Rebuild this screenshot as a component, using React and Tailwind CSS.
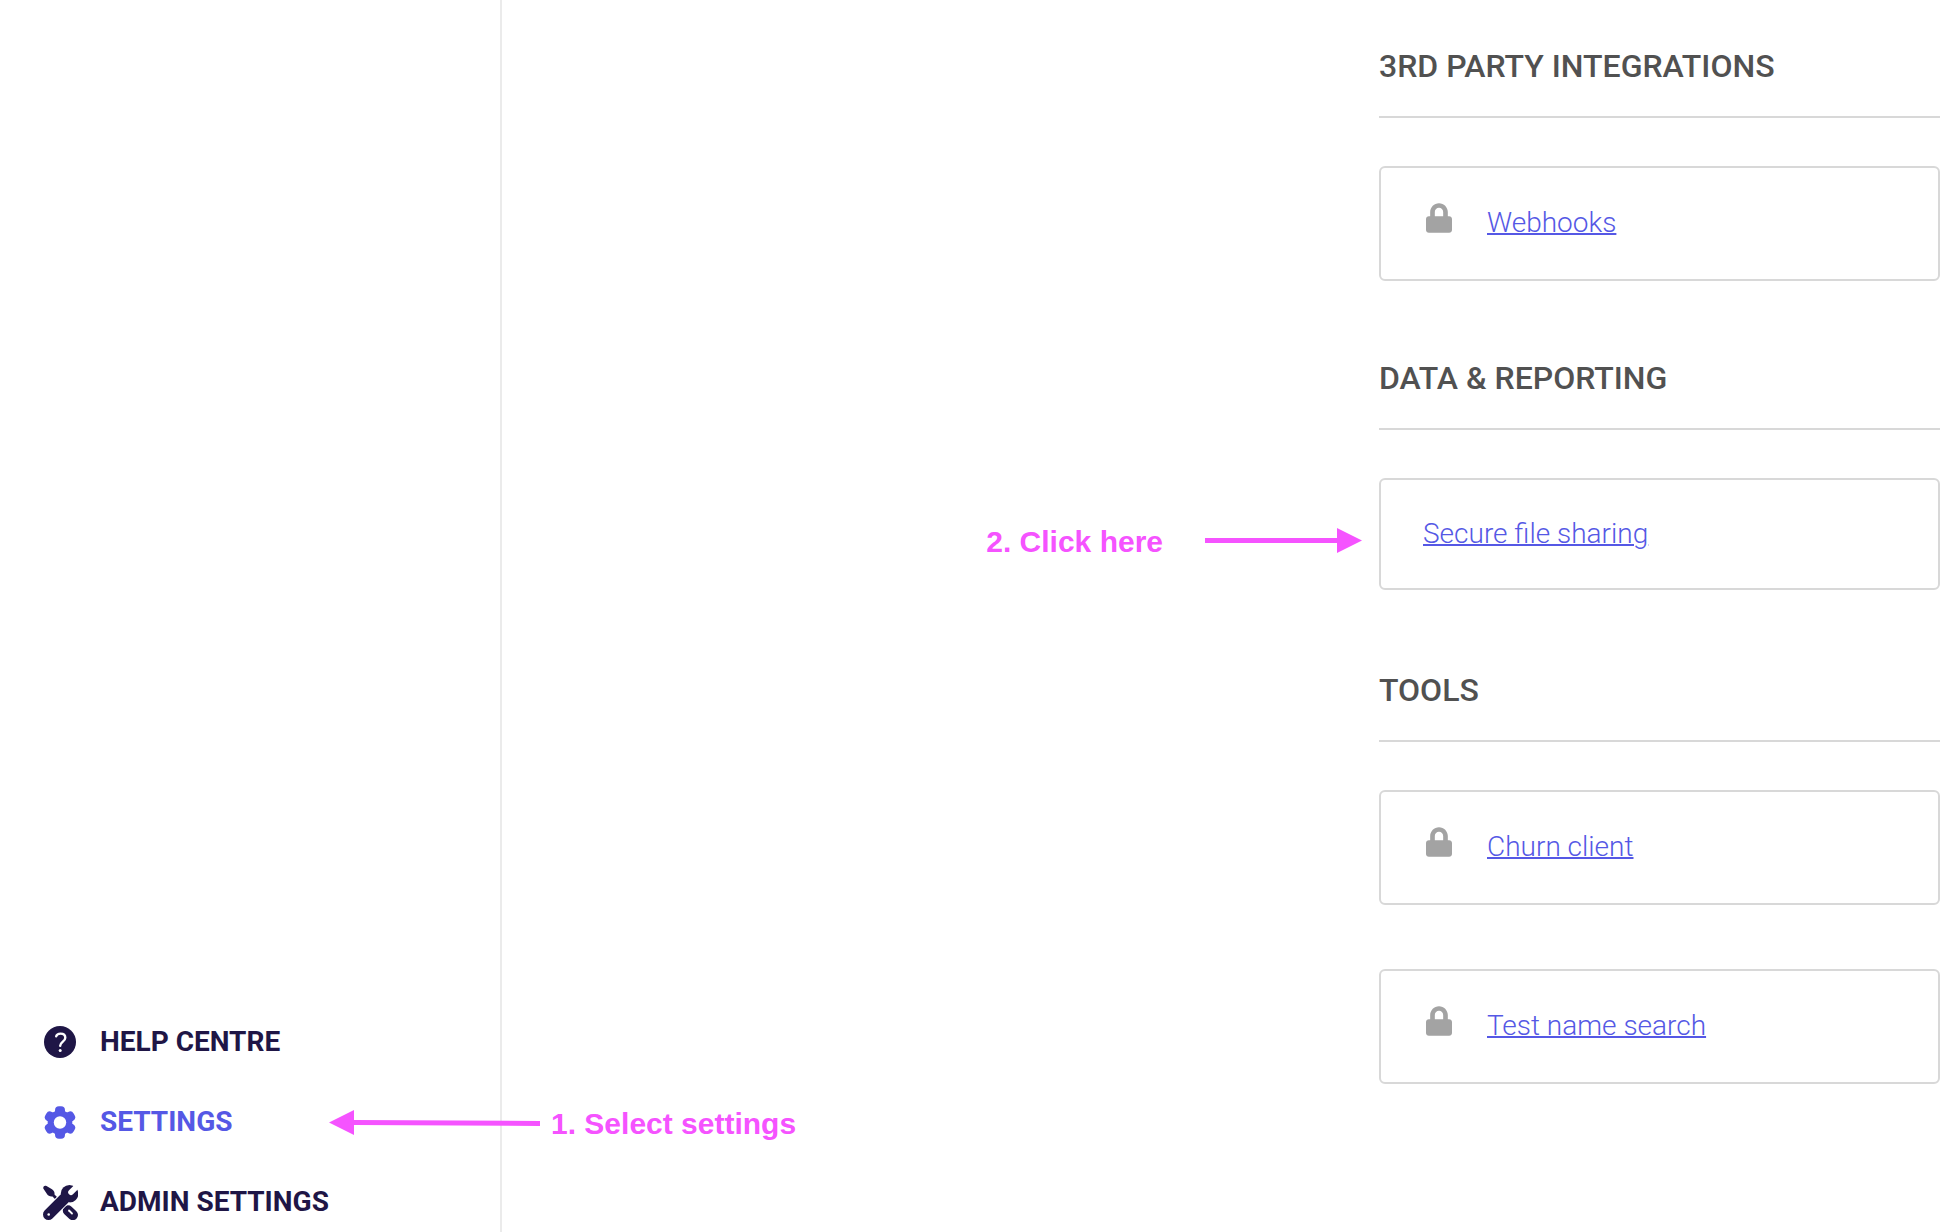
import React from "react";
import { FaLock } from "react-icons/fa";

const HelpIcon = () => (
  <svg className="size-8" viewBox="0 0 32 32" fill="none">
    <circle cx="16" cy="16" r="16" fill="currentColor" />
    <path
      d="M12.200 10.300C12.700 8.400 14.400 7.600 16.500 7.600C19.400 7.600 21.300 9.300 21.300 11.700C21.300 15.600 16.300 15.600 16.200 19.800"
      stroke="white"
      strokeWidth="2.400"
      strokeLinecap="round"
    />
    <circle cx="16.200" cy="24.600" r="1.500" fill="white" />
  </svg>
);

const GearIcon = () => (
  <svg className="h-[33px] w-8" viewBox="0 0 32 33" fill="currentColor">
    <circle cx="16" cy="16.500" r="12.300" />
    <rect x="11" y="0.200" width="10" height="32.600" rx="4" />
    <rect x="11" y="0.200" width="10" height="32.600" rx="4" transform="rotate(60 16 16.500)" />
    <rect x="11" y="0.200" width="10" height="32.600" rx="4" transform="rotate(120 16 16.500)" />
    <circle cx="16" cy="16.500" r="6.200" fill="white" />
  </svg>
);

const ToolsIcon = () => (
  <svg className="size-[35px]" viewBox="0 0 35 35" fill="none" stroke="currentColor" strokeLinecap="round">
    {/* screwdriver */}
    <path d="M0.300 3.500C0 1.200 1.500 0.300 3.500 1L9 4.200C11.200 5.800 11.800 7.500 11.500 9.500L14 12L12 14L9.500 11.500C7 11.800 5 10.800 3.800 8.800Z" fill="currentColor" stroke="none" />
    <path d="M25 25.500L29.800 30" strokeWidth="10.400" />
    <path d="M26 25.500L29 28.500" stroke="white" strokeWidth="1.800" />
    {/* wrench */}
    <circle cx="26.500" cy="8.800" r="8.800" fill="currentColor" stroke="none" />
    <path d="M9 26L22 13" stroke="white" strokeWidth="13" strokeLinecap="butt" />
    <path d="M5.500 29.500L22 13" strokeWidth="11" />
    <path d="M28 7.300L37 -1.700" stroke="white" strokeWidth="5.600" />
    <circle cx="5.700" cy="29.500" r="1.300" fill="white" stroke="none" />
  </svg>
);

const navItems = [
  { label: "Help centre", icon: HelpIcon },
  { label: "Settings", icon: GearIcon, active: true },
  { label: "Admin settings", icon: ToolsIcon },
];

const sections = [
  {
    title: "3rd party integrations",
    items: [{ name: "Webhooks", locked: true }],
  },
  {
    title: "Data & reporting",
    items: [{ name: "Secure file sharing", locked: false, step: "2. Click here" }],
  },
  {
    title: "Tools",
    items: [
      { name: "Churn client", locked: true },
      { name: "Test name search", locked: true },
    ],
  },
];

const StepText = ({ children }) => (
  <span className="font-['Liberation_Sans',Arial,sans-serif] text-[30px] font-bold text-[#f553ff]">
    {children}
  </span>
);

const SideNav = () => (
  <aside className="flex w-[502px] shrink-0 flex-col justify-end border-r-2 border-[#ebebeb]">
    <nav className="-mb-2.5">
      <ul>
        {navItems.map(({ label, icon: Icon, active }) => (
          <li key={label} className="relative">
            <a
              href="#"
              className={`flex h-20 items-center text-[28px] font-bold uppercase ${
                active ? "text-[#5558e5]" : "text-[#1f1646]"
              }`}
            >
              <span className="mr-5 ml-10 flex w-10 justify-center">
                <Icon />
              </span>
              {label}
            </a>
            {active && (
              <div className="absolute top-0 left-[329px] flex h-[82px] items-center gap-[11px] whitespace-nowrap">
                <svg width="211" height="26" viewBox="0 0 211 26" fill="#f553ff">
                  <path d="M0 12.500 25 0v10L211 11v5L25 15v10z" />
                </svg>
                <StepText>1. Select settings</StepText>
              </div>
            )}
          </li>
        ))}
      </ul>
    </nav>
  </aside>
);

const SettingCard = ({ name, locked, step }) => (
  <li className="relative min-h-[115px]">
    <div
      className={`flex items-center rounded-md border-2 border-[#d8d8d8] ${
        locked ? "h-[115px] pb-px pl-[45px]" : "h-28 pl-[42px]"
      }`}
    >
      {locked && <FaLock className="mr-[35px] mb-2.5 h-[30px] w-[26px] text-[#a3a3a3]" />}
      <a
        href="#"
        className="text-[28px] font-light text-[#5558e5] underline decoration-2"
      >
        {name}
      </a>
    </div>
    {step && (
      <div className="absolute top-0 right-full mr-[17px] flex h-[126px] items-center gap-[42px] whitespace-nowrap">
        <StepText>{step}</StepText>
        <svg width="157" height="26" viewBox="0 0 157 26" fill="#f553ff">
          <path d="M0 10H132V0L157 12.500 132 25V15H0z" />
        </svg>
      </div>
    )}
  </li>
);

const App = () => {
  return (
    <div className="flex min-h-screen overflow-hidden bg-white font-[Roboto,sans-serif]">
      <SideNav />
      <main className="flex flex-1 flex-col gap-[61px] pt-[30px] pl-[877px]">
        {sections.map(({ title, items }) => (
          <section key={title}>
            <h2 className="border-b-2 border-[#d8d8d8] pt-4 pb-[30px] text-[32px] leading-10 font-medium text-[#515151] uppercase">
              {title}
            </h2>
            <ul className="mt-12 flex flex-col gap-16">
              {items.map((item) => (
                <SettingCard key={item.name} {...item} />
              ))}
            </ul>
          </section>
        ))}
      </main>
    </div>
  );
};

export default App;
